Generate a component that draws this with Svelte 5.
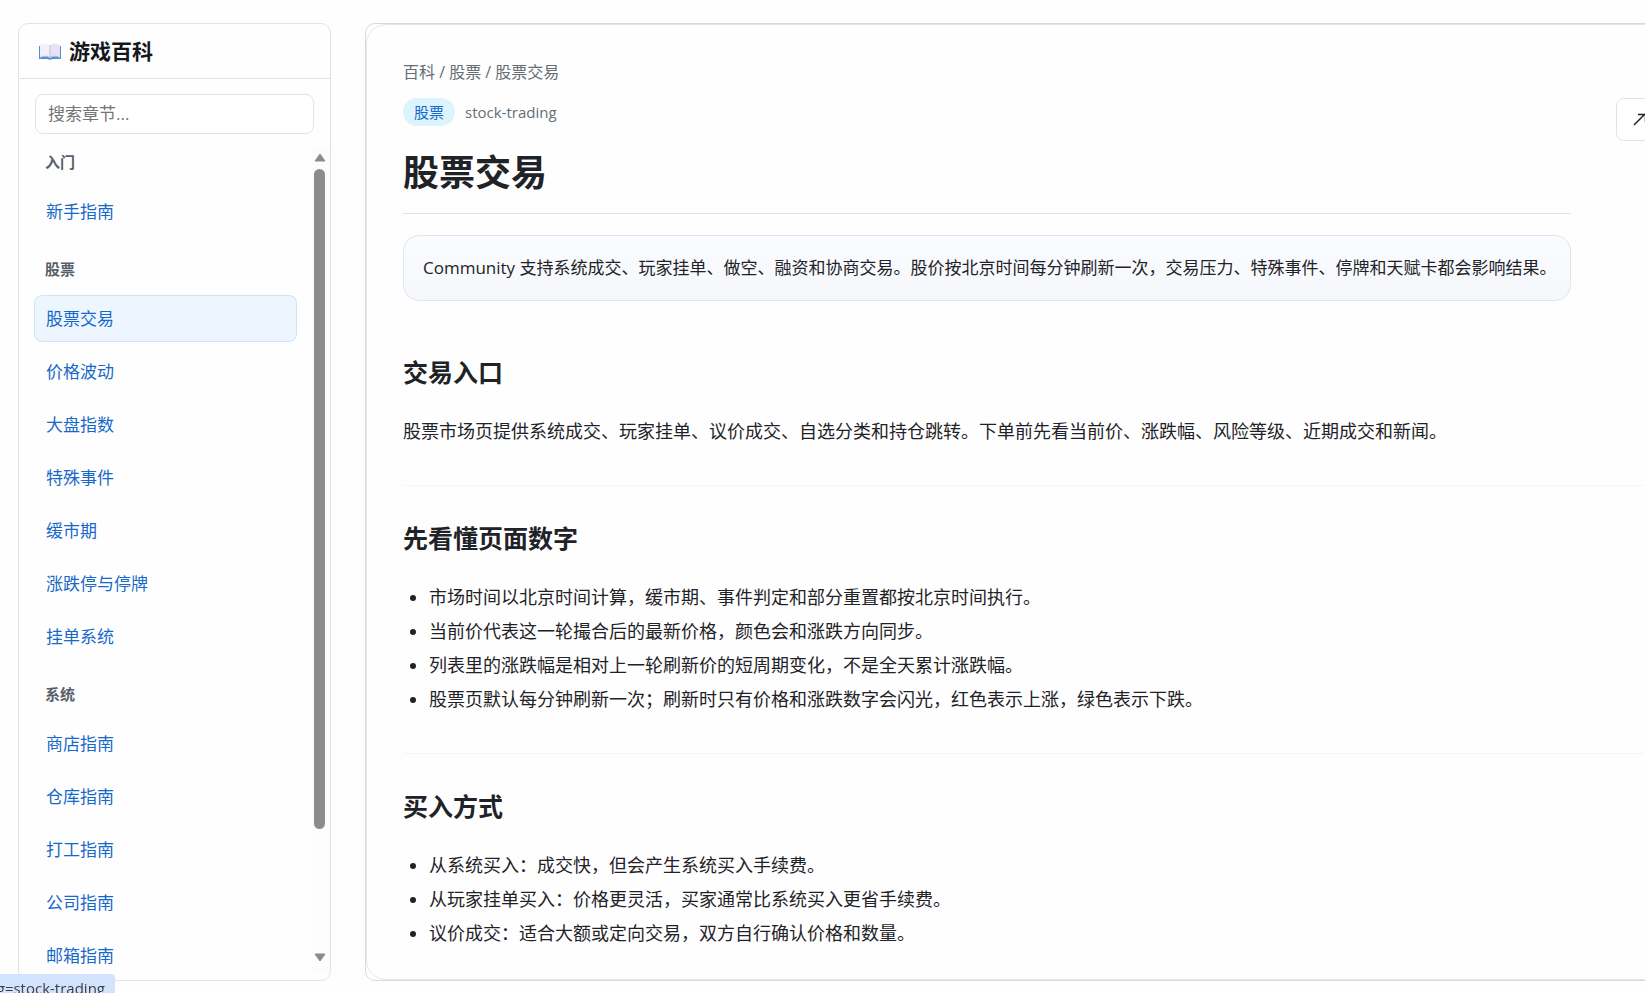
<script>
  let query = $state('');
  let current = $state('股票交易');

  const groups = [
    { name: '入门', items: ['新手指南'] },
    {
      name: '股票',
      items: ['股票交易', '价格波动', '大盘指数', '特殊事件', '缓市期', '涨跌停与停牌', '挂单系统']
    },
    { name: '系统', items: ['商店指南', '仓库指南', '打工指南', '公司指南', '邮箱指南'] }
  ];

  const sections = [
    {
      title: '交易入口',
      text: '股票市场页提供系统成交、玩家挂单、议价成交、自选分类和持仓跳转。下单前先看当前价、涨跌幅、风险等级、近期成交和新闻。'
    },
    {
      title: '先看懂页面数字',
      list: [
        '市场时间以北京时间计算，缓市期、事件判定和部分重置都按北京时间执行。',
        '当前价代表这一轮撮合后的最新价格，颜色会和涨跌方向同步。',
        '列表里的涨跌幅是相对上一轮刷新价的短周期变化，不是全天累计涨跌幅。',
        '股票页默认每分钟刷新一次；刷新时只有价格和涨跌数字会闪光，红色表示上涨，绿色表示下跌。'
      ]
    },
    {
      title: '买入方式',
      list: [
        '从系统买入：成交快，但会产生系统买入手续费。',
        '从玩家挂单买入：价格更灵活，买家通常比系统买入更省手续费。',
        '议价成交：适合大额或定向交易，双方自行确认价格和数量。'
      ]
    }
  ];

  let visibleGroups = $derived(
    groups
      .map((g) => ({ ...g, items: g.items.filter((i) => i.includes(query.trim())) }))
      .filter((g) => g.items.length > 0)
  );
</script>

<div class="page">
  <aside class="sidebar">
    <header class="sidebar-header">
      <svg class="book" viewBox="0 0 22 20" aria-hidden="true">
        <path d="M0 5h22v13h-8.500q-2.500 1.500-5 0H0z" fill="#4a94de" />
        <path d="M1 4.200Q6.500 1.400 11 4.200v12.600q-4.500-2.400-10 0z" fill="#f3eef9" />
        <path d="M21 4.200Q15.500 1.400 11 4.200v12.600q4.500-2.400 10 0z" fill="#e9e2f4" />
        <path d="M1 16.300q5.500-2.400 10 0 4.500-2.400 10 0" fill="none" stroke="#b9b3d6" />
        <path d="M11 4.200v13" stroke="#c3bcdc" />
      </svg>
      <h2>游戏百科</h2>
    </header>

    <div class="search">
      <input type="text" bind:value={query} placeholder="搜索章节..." aria-label="搜索章节" />
    </div>

    <div class="scroll-area">
      <nav>
        {#each visibleGroups as group}
          <section class="group">
            <h3>{group.name}</h3>
            <ul>
              {#each group.items as item}
                <li>
                  <a
                    href="#{item}"
                    class:active={item === current}
                    onclick={() => (current = item)}>{item}</a
                  >
                </li>
              {/each}
            </ul>
          </section>
        {/each}
      </nav>
      <div class="scrollbar" aria-hidden="true">
        <svg viewBox="0 0 12 9"><path d="M6 1l5 7H1z" /></svg>
        <div class="track"><div class="thumb"></div></div>
        <svg viewBox="0 0 12 9"><path d="M6 8l5-7H1z" /></svg>
      </div>
    </div>
  </aside>

  <main class="panel">
    <article class="article">
      <header class="article-header">
        <div class="heading">
          <p class="breadcrumb">百科 / 股票 / 股票交易</p>
          <div class="meta">
            <span class="badge">股票</span>
            <span class="slug">stock-trading</span>
          </div>
          <h1>股票交易</h1>
          <p class="summary">
            Community 支持系统成交、玩家挂单、做空、融资和协商交易。股价按北京时间每分钟刷新一次，交易压力、特殊事件、停牌和天赋卡都会影响结果。
          </p>
        </div>
        <button class="open" type="button" aria-label="打开">
          <svg viewBox="0 0 14 14"><path d="M1 13L12 2M5 2.500h7.500V10" /></svg>
        </button>
      </header>

      {#each sections as section}
        <section class="block">
          <h2>{section.title}</h2>
          {#if section.list}
            <ul>
              {#each section.list as line}
                <li>{line}</li>
              {/each}
            </ul>
          {:else}
            <p>{section.text}</p>
          {/if}
        </section>
      {/each}
    </article>
  </main>

  <div class="status"><span>g=stock-trading</span></div>
</div>

<style>
  :global(body) {
    margin: 0;
    background: #fefefe;
  }

  .page {
    display: flex;
    gap: 34px;
    height: 100vh;
    padding: 23px 0 12px 18px;
    box-sizing: border-box;
    overflow: hidden;
    color: #1f2328;
    font-family: 'Open Sans', 'Noto Sans CJK SC', sans-serif;
  }

  h1,
  h2,
  h3,
  p,
  ul {
    margin: 0;
    padding: 0;
  }

  .sidebar {
    display: flex;
    flex-direction: column;
    flex: 0 0 313px;
    box-sizing: border-box;
    border: 1px solid #dfe3e8;
    border-radius: 10px;
    overflow: hidden;
  }

  .sidebar-header {
    display: flex;
    align-items: center;
    gap: 8px;
    height: 54px;
    padding-left: 20px;
    border-bottom: 1px solid #dfe3e8;
  }

  .sidebar-header h2 {
    color: #14181d;
    font-size: 21px;
    line-height: 30px;
  }

  .book {
    width: 22px;
    height: 20px;
  }

  .search {
    padding: 15px 16px 12px;
  }

  .search input {
    width: 100%;
    height: 40px;
    box-sizing: border-box;
    padding: 0 12px 2px;
    border: 1px solid #dfe3e8;
    border-radius: 8px;
    background: #fff;
    color: #1f2328;
    font: inherit;
    font-size: 17px;
  }

  .search input::placeholder {
    color: #757575;
  }

  .scroll-area {
    display: flex;
    flex: 1;
    min-height: 0;
    margin-bottom: 8px;
  }

  nav {
    flex: 1;
    overflow: hidden;
    padding: 4px 15px 0;
  }

  .group {
    margin-bottom: 22px;
  }

  .group h3 {
    padding: 0 11px;
    margin-bottom: 14px;
    color: #57606a;
    font-size: 15px;
    line-height: 24px;
  }

  .group ul {
    display: flex;
    flex-direction: column;
    gap: 6px;
    list-style: none;
  }

  .group a {
    display: block;
    padding: 10px 11px;
    border: 1px solid transparent;
    border-radius: 8px;
    color: #1769c9;
    font-size: 17px;
    line-height: 25px;
    text-decoration: none;
  }

  .group a.active {
    border-color: #d3e3f5;
    background: #edf6ff;
  }

  .scrollbar {
    display: flex;
    flex-direction: column;
    align-items: center;
    gap: 7px;
    width: 15px;
    padding: 7px 3px 10px 0;
    background: #fcfcfd;
  }

  .scrollbar svg {
    width: 12px;
    height: 9px;
    fill: #8b8b8b;
    stroke: #8b8b8b;
    stroke-linejoin: round;
  }

  .track {
    flex: 1;
  }

  .thumb {
    width: 11px;
    height: 85%;
    border-radius: 6px;
    background: #8b8b8b;
  }

  /* the article runs past the right edge of the window */
  .panel {
    flex: 1;
    min-width: 0;
    margin-right: -120px;
    border: 1px solid #d5dae0;
    border-radius: 10px;
  }

  .article {
    height: 100%;
    box-sizing: border-box;
    padding: 35px 35px 0 36px;
    border: 1px solid #e3e7eb;
    border-radius: 20px;
    overflow: hidden;
  }

  .article-header {
    display: flex;
    align-items: flex-start;
    gap: 45px;
  }

  .heading {
    flex: 1;
  }

  .breadcrumb {
    color: #656d76;
    font-size: 16px;
    line-height: 24px;
  }

  .meta {
    display: flex;
    align-items: center;
    gap: 10px;
    margin-top: 14px;
  }

  .badge {
    padding: 0 11px;
    border-radius: 14px;
    background: #ddf4ff;
    color: #1769c9;
    font-size: 15px;
    line-height: 28px;
  }

  .slug {
    color: #656d76;
    font-size: 15px;
    line-height: 28px;
  }

  h1 {
    margin-top: 22px;
    padding-bottom: 15px;
    border-bottom: 1px solid #dfe3e8;
    font-size: 36px;
    line-height: 50px;
  }

  .summary {
    margin-top: 21px;
    padding: 18px 11px 18px 19px;
    border: 1px solid #dfe5ec;
    border-radius: 16px;
    background: linear-gradient(180deg, #fafcff, #f5f7fb);
    font-size: 17px;
    line-height: 28px;
  }

  .open {
    width: 112px;
    height: 43px;
    margin-top: 38px;
    padding: 2px 16px 0;
    border: 1px solid #dfe3e8;
    border-radius: 8px;
    background: #fff;
    text-align: left;
  }

  .open svg {
    width: 14px;
    height: 14px;
    fill: none;
    stroke: #1f2328;
    stroke-width: 1.5;
  }

  .block {
    padding: 36px 0 37px;
    border-bottom: 1px solid #f3f5f7;
  }

  .article-header + .block {
    padding-top: 55px;
  }

  .block:last-child {
    border-bottom: none;
  }

  .block h2 {
    margin-bottom: 26px;
    font-size: 25px;
    line-height: 32px;
  }

  .block p,
  .block li {
    font-size: 18px;
    line-height: 34px;
  }

  .block ul {
    padding-left: 26px;
  }

  .status {
    position: fixed;
    left: 0;
    bottom: 0;
    display: flex;
    justify-content: flex-end;
    width: 115px;
    height: 19px;
    box-sizing: border-box;
    padding-right: 10px;
    border-top-right-radius: 4px;
    background: #d3e3fd;
    color: #3c4043;
    font-size: 15px;
    line-height: 28px;
    white-space: nowrap;
    overflow: hidden;
  }
</style>
